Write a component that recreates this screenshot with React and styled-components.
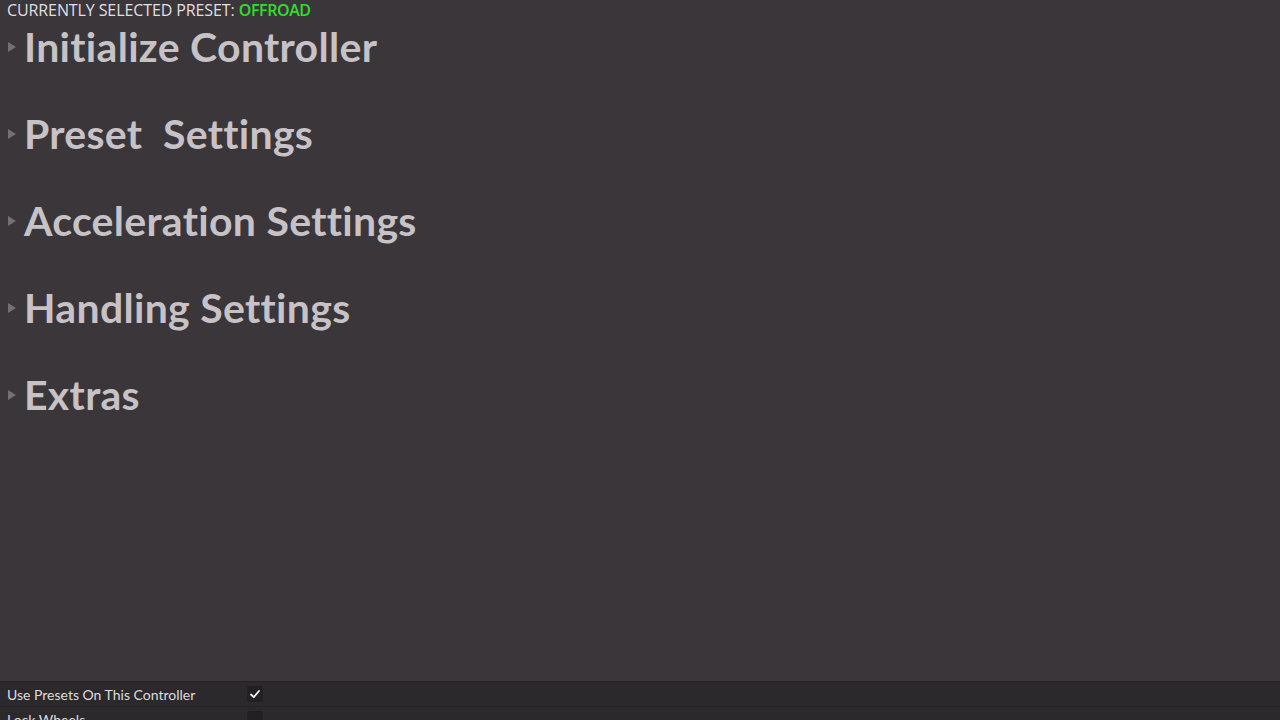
import styled, { createGlobalStyle } from "styled-components";

const Global = createGlobalStyle`
	html, body {
		margin: 0;
		padding: 0;
		background: #3a363a;
		overflow: hidden;
	}
	#root {
		height: 100vh;
	}
`;

const Page = styled.div`
	display: flex;
	flex-direction: column;
	height: 720px;
	background: #3a363a;
	font-family: "Open Sans", "Noto Sans", sans-serif;
`;

const Header = styled.div`
	padding: 0 0 0 7px;
	height: 20px;
	line-height: 20px;
	font-size: 16px;
	color: #e2dfe2;
	text-transform: uppercase;
	letter-spacing: -0.1px;

	span {
		color: #2ee02e;
		font-weight: 600;
		letter-spacing: -0.4px;
	}
`;

const SectionList = styled.div`
	flex: 1;
	display: flex;
	flex-direction: column;
	padding-top: 4px;
`;

const Section = styled.div`
	display: flex;
	height: 87px;
	align-items: flex-start;
`;

const Arrow = styled.span`
	width: 0;
	height: 0;
	margin: 18px 8px 0 8px;
	border-top: 5px solid transparent;
	border-bottom: 5px solid transparent;
	border-left: 8px solid #747074;
`;

const Title = styled.h2`
	margin: 0;
	font-family: "Lato", "Open Sans", sans-serif;
	font-size: 41px;
	font-weight: 700;
	line-height: 46px;
	color: #c6c2c6;
	letter-spacing: 0.3px;
	white-space: pre;
`;

const Options = styled.div`
	background: #2c292c;
	border-top: 1px solid #252225;
	height: 38px;
	overflow: hidden;
	font-family: "Lato", "Open Sans", sans-serif;
`;

const OptionRow = styled.div`
	display: grid;
	grid-template-columns: 240px 16px;
	align-items: center;
	height: 24px;
	padding-left: 7px;
	font-size: 14px;
	color: #dedbde;
	border-bottom: 1px solid #262326;
`;

const Check = styled.div`
	width: 16px;
	height: 16px;
	background: #231f23;
	border-radius: 2px;
	display: flex;
	align-items: center;
	justify-content: center;
`;

const sections = [
	"Initialize Controller",
	"Preset  Settings",
	"Acceleration Settings",
	"Handling Settings",
	"Extras",
];

const options = [
	{ label: "Use Presets On This Controller", checked: true },
	{ label: "Lock Wheels", checked: false },
];

const App = () => {
	return (
		<Page>
			<Global />
			<Header>
				Currently selected preset: <span>Offroad</span>
			</Header>
			<SectionList>
				{sections.map((name) => (
					<Section key={name}>
						<Arrow />
						<Title>{name}</Title>
					</Section>
				))}
			</SectionList>
			<Options>
				{options.map((o) => (
					<OptionRow key={o.label}>
						<span>{o.label}</span>
						<Check>
							{o.checked ? (
								<svg width="12" height="12" viewBox="0 0 12 12">
									<path
										d="M2 6.5 L4.8 9.2 L10 3"
										fill="none"
										stroke="#f2f2f2"
										strokeWidth="1.8"
										strokeLinecap="round"
										strokeLinejoin="round"
									/>
								</svg>
							) : null}
						</Check>
					</OptionRow>
				))}
			</Options>
		</Page>
	);
};

export default App;
